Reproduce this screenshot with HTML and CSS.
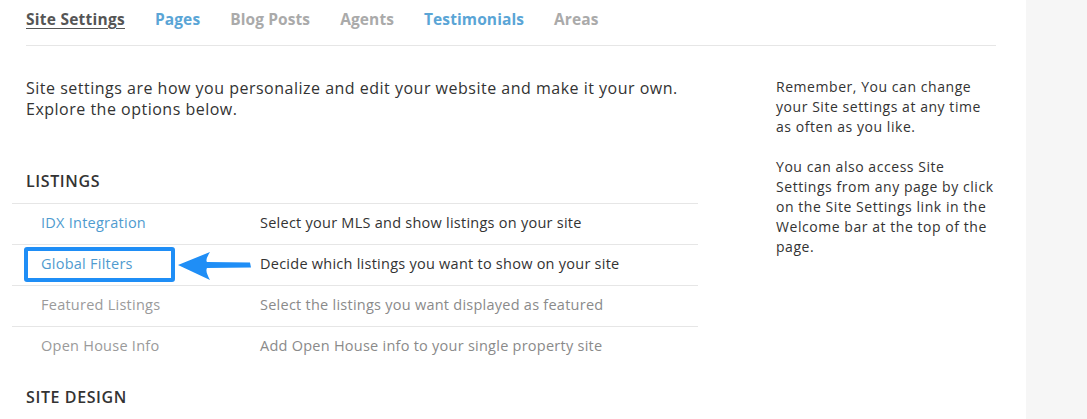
FILE: index.html
```html
<!DOCTYPE html>
<html>
<head>
<meta charset="utf-8">
<link rel="stylesheet" href="styles.css">
</head>
<body>
<div class="page">
  <div class="main">
    <nav class="tabs">
      <a class="tab active">Site Settings</a>
      <a class="tab blue">Pages</a>
      <a class="tab">Blog Posts</a>
      <a class="tab">Agents</a>
      <a class="tab blue">Testimonials</a>
      <a class="tab">Areas</a>
    </nav>
    <div class="content">
      <div class="left">
        <p class="intro">Site settings are how you personalize and edit your website and make it your own. Explore the options below.</p>
        <h2 class="section">LISTINGS</h2>
        <div class="table">
          <div class="row">
            <a class="name link">IDX Integration</a>
            <span class="desc">Select your MLS and show listings on your site</span>
          </div>
          <div class="row highlighted">
            <a class="name link">Global Filters</a>
            <span class="desc">Decide which listings you want to show on your site</span>
            <span class="hl-box"></span>
            <svg class="arrow" width="80" height="36" viewBox="0 0 80 36"><path d="M2 17 L34 4 Q29 12 31 14 L74 14.5 L75 19.5 L31 20 Q29 23 34 32 Z" fill="#1f8ef6"/></svg>
          </div>
          <div class="row">
            <a class="name muted">Featured Listings</a>
            <span class="desc muted2">Select the listings you want displayed as featured</span>
          </div>
          <div class="row">
            <a class="name muted">Open House Info</a>
            <span class="desc muted2">Add Open House info to your single property site</span>
          </div>
        </div>
        <h2 class="section design">SITE DESIGN</h2>
      </div>
      <aside class="right">
        <p>Remember, You can change your Site settings at any time as often as you like.</p>
        <p>You can also access Site Settings from any page by click on the Site Settings link in the Welcome bar at the top of the page.</p>
      </aside>
    </div>
  </div>
  <div class="side"></div>
</div>
</body>
</html>
```

FILE: styles.css
```css
html, body {
  margin: 0;
  padding: 0;
  background: #fff;
  font-family: "Open Sans", "Liberation Sans", sans-serif;
  color: #333;
  overflow: hidden;
}
.page {
  display: flex;
  height: 419px;
}
.main {
  width: 1026px;
  flex: none;
  box-sizing: border-box;
  padding: 0 30px 0 26px;
}
.side {
  flex: 1;
  background: #f6f6f6;
}
.tabs {
  display: flex;
  gap: 30px;
  height: 46px;
  box-sizing: border-box;
  padding-top: 8px;
  border-bottom: 1px solid #e6e6e6;
}
.tab {
  font-size: 15.5px;
  font-weight: 700;
  letter-spacing: 0.1px;
  color: #aaaaaa;
  line-height: 22px;
}
.tab.blue { color: #5aa5d6; }
.tab.active {
  color: #555;
  letter-spacing: 0.25px;
  text-decoration: underline;
  text-underline-offset: 3px;
}
.content {
  display: flex;
}
.left {
  width: 672px;
  flex: none;
}
.intro {
  margin: 32px 0 0;
  font-size: 16px;
  letter-spacing: 0.5px;
  line-height: 21px;
  color: #333;
}
.section {
  margin: 51px 0 0;
  font-size: 16px;
  font-weight: 600;
  letter-spacing: 0.6px;
  line-height: 21px;
  color: #333;
}
.section.design { margin-top: 20px; }
.table {
  margin: 11px 0 0 -14px;
}
.row {
  position: relative;
  display: flex;
  align-items: center;
  height: 40px;
  border-top: 1px solid #e6e6e6;
  font-size: 14.5px;
  letter-spacing: 0.25px;
}
.row > .name, .row > .desc {
  position: relative;
  top: -2px;
}
.name {
  width: 219px;
  padding-left: 29px;
  flex: none;
}
.link { color: #4f9bcf; }
.muted { color: #9a9a9a; }
.desc { color: #333; }
.desc.muted2 { color: #8a8a8a; }
.hl-box {
  position: absolute;
  left: 12px;
  top: 2px;
  width: 143px;
  height: 27px;
  border: 4px solid #1f8ef6;
  border-radius: 3px;
}
.arrow {
  position: absolute;
  left: 164px;
  top: 3px;
}
.right {
  margin-left: 78px;
  width: 220px;
  flex: none;
  padding-top: 31px;
  font-size: 14px;
  letter-spacing: 0.55px;
  line-height: 20px;
  color: #333;
}
.right p {
  margin: 0 0 20px;
}
```
